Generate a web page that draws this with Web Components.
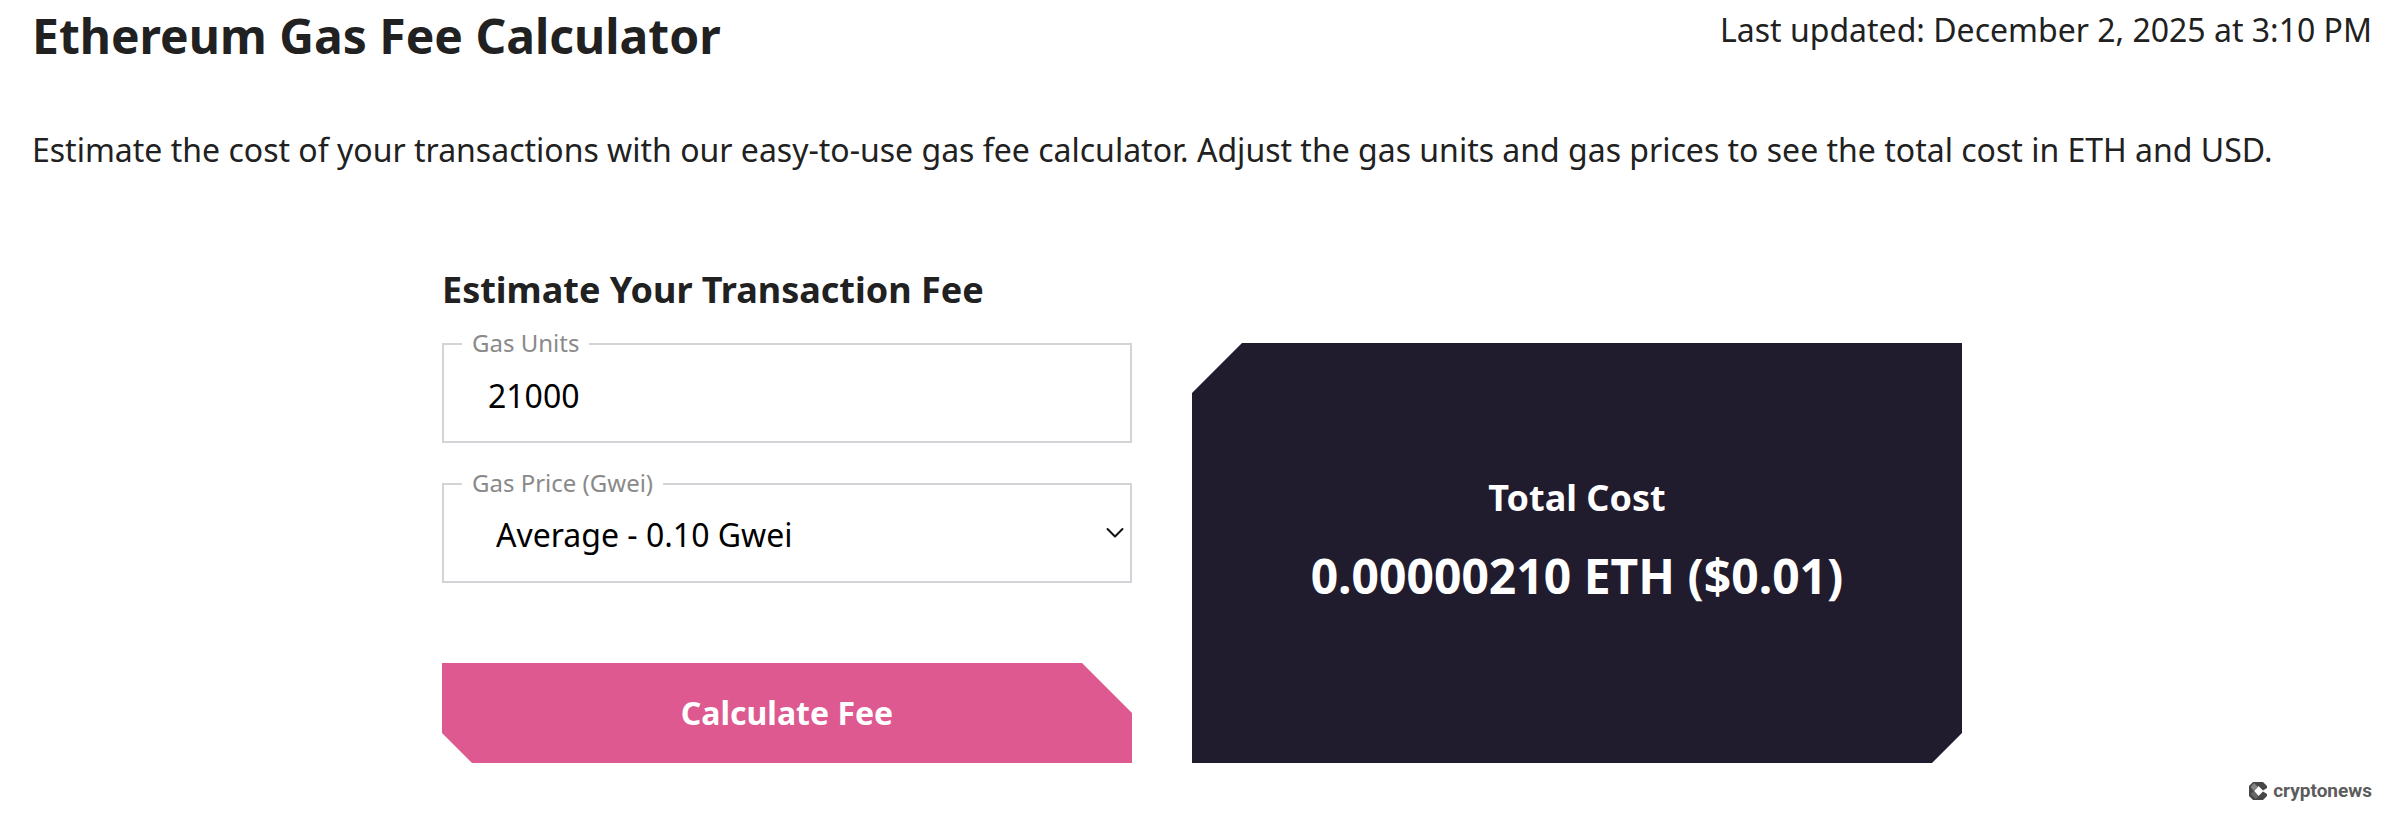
<!DOCTYPE html>
<html lang="en">
<head>
<meta charset="utf-8">
<meta name="viewport" content="width=device-width, initial-scale=1">
<title>Ethereum Gas Fee Calculator</title>
<style>
  body { margin: 0; background: #fff; color: #212121; font-family: "Noto Sans", sans-serif; font-size: 32px; line-height: 48px; }
</style>
</head>
<body>
<gas-calculator></gas-calculator>
<script>
const define = (name, html, setup) => {
  const template = document.createElement('template');
  template.innerHTML = html;
  customElements.define(name, class extends HTMLElement {
    constructor() {
      super();
      this.attachShadow({ mode: 'open' }).append(template.content.cloneNode(true));
    }
    connectedCallback() { if (setup) setup(this, this.shadowRoot); }
  });
};

define('page-header', `
  <style>
    :host { display: flex; justify-content: space-between; align-items: flex-start; gap: 32px; }
    h1 { margin: 0; font-size: 48px; line-height: 72px; font-weight: 700; }
    p { margin: 6px 0 0; }
  </style>
  <h1><slot></slot></h1>
  <p><slot name="updated"></slot></p>
`);

const fieldStyle = `
    :host { display: block; position: relative; }
    label { position: absolute; left: 20px; top: -16px; padding: 0 10px; background: #fff; color: #8a8a8a; font-size: 24px; line-height: 32px; }
    input, select { display: block; box-sizing: border-box; width: 100%; height: 100px; margin: 0; border: 2px solid #d3d3d8; border-radius: 0; background: #fff; color: #000; font: inherit; appearance: none; outline-offset: 2px; }
    input { padding: 4px 44px 0; }
    select { padding: 4px 52px 0; }
    svg { position: absolute; right: 8px; top: 44px; width: 18px; height: 12px; pointer-events: none; }
`;

define('units-field', `
  <style>${fieldStyle}</style>
  <input id="units" type="text" inputmode="numeric" value="21000">
  <label for="units"><slot></slot></label>
`, (host, root) => {
  Object.defineProperty(host, 'value', { configurable: true, get: () => Number(root.querySelector('input').value) || 0 });
});

define('price-field', `
  <style>${fieldStyle}</style>
  <select id="price"><option value="0.10">Average - 0.10 Gwei</option></select>
  <label for="price"><slot></slot></label>
  <svg viewBox="0 0 18 12" fill="none" stroke="#111" stroke-width="2" stroke-linecap="round" stroke-linejoin="round" aria-hidden="true"><path d="M1.5 2 9 9.500 16.500 2"/></svg>
`, (host, root) => {
  Object.defineProperty(host, 'value', { configurable: true, get: () => Number(root.querySelector('select').value) });
});

define('cut-button', `
  <style>
    :host { display: block; }
    button { display: block; width: 100%; height: 100px; padding: 0; border: 0; background: #dd5990; color: #fff; font: inherit; font-weight: 700; cursor: pointer;
      clip-path: polygon(0 0, calc(100% - 50px) 0, 100% 50px, 100% 100%, 30px 100%, 0 calc(100% - 30px)); }
  </style>
  <button type="button"><slot></slot></button>
`);

define('cost-card', `
  <style>
    :host { display: flex; flex-direction: column; justify-content: center; align-items: center; gap: 15px; box-sizing: border-box; padding: 0 32px 23px;
      background: #211b2e; color: #fff; text-align: center; font-weight: 700;
      clip-path: polygon(50px 0, 100% 0, 100% calc(100% - 30px), calc(100% - 30px) 100%, 0 100%, 0 50px); }
    h3, output { display: block; margin: 0; }
    h3 { font-size: 36px; line-height: 54px; }
    output { font-size: 48px; line-height: 72px; }
  </style>
  <h3><slot></slot></h3>
  <output><slot name="amount"></slot></output>
`);

define('brand-mark', `
  <style>
    :host { display: block; }
    a { display: flex; align-items: center; gap: 6px; color: #5c5c5c; text-decoration: none; font: 700 19px/24px Roboto, sans-serif; }
    svg { width: 18px; height: 18px; }
  </style>
  <a href="#"><svg viewBox="0 0 18 18" aria-hidden="true">
    <path fill="#474747" d="M4 0H14L18 4V6L14 8.500 9.500 4 5 9 9.500 14 14 9.500 18 12V14L14 18H4L0 14V4Z"/>
    <path fill="#858585" d="M5 1 9 5 5 9 1.500 5Z"/>
    <path fill="#686868" d="M5 9 9.500 14 7 17 1.500 12Z"/>
  </svg><slot></slot></a>
`);

define('gas-calculator', `
  <style>
    :host { display: block; padding: 0 34px 0 32px; }
    .intro { margin: 54px 0 89px; }
    h2 { margin: 0 0 26px; font-size: 36px; line-height: 54px; font-weight: 700; }
    main { max-width: 1520px; margin: 0 auto; }
    .columns { display: grid; grid-template-columns: 69fr 77fr; gap: 60px; }
    form { display: flex; flex-direction: column; gap: 40px; }
    cut-button { margin-top: 40px; }
    footer { display: flex; justify-content: flex-end; margin-top: 16px; }
  </style>
  <page-header>Ethereum Gas Fee Calculator<span slot="updated">Last updated: December 2, 2025 at 3:10 PM</span></page-header>
  <p class="intro">Estimate the cost of your transactions with our easy-to-use gas fee calculator. Adjust the gas units and gas prices to see the total cost in ETH and USD.</p>
  <main>
    <h2>Estimate Your Transaction Fee</h2>
    <div class="columns">
      <form>
        <units-field>Gas Units</units-field>
        <price-field>Gas Price (Gwei)</price-field>
        <cut-button>Calculate Fee</cut-button>
      </form>
      <cost-card>Total Cost<span slot="amount">0.00000210 ETH ($0.01)</span></cost-card>
    </div>
  </main>
  <footer><brand-mark>cryptonews</brand-mark></footer>
`, (host, root) => {
  const usdPerEth = 2800;
  root.querySelector('cut-button').addEventListener('click', () => {
    const eth = root.querySelector('units-field').value * root.querySelector('price-field').value / 1e9;
    root.querySelector('[slot=amount]').textContent = eth.toFixed(8) + ' ETH ($' + (eth * usdPerEth).toFixed(2) + ')';
  });
});
</script>
</body>
</html>
